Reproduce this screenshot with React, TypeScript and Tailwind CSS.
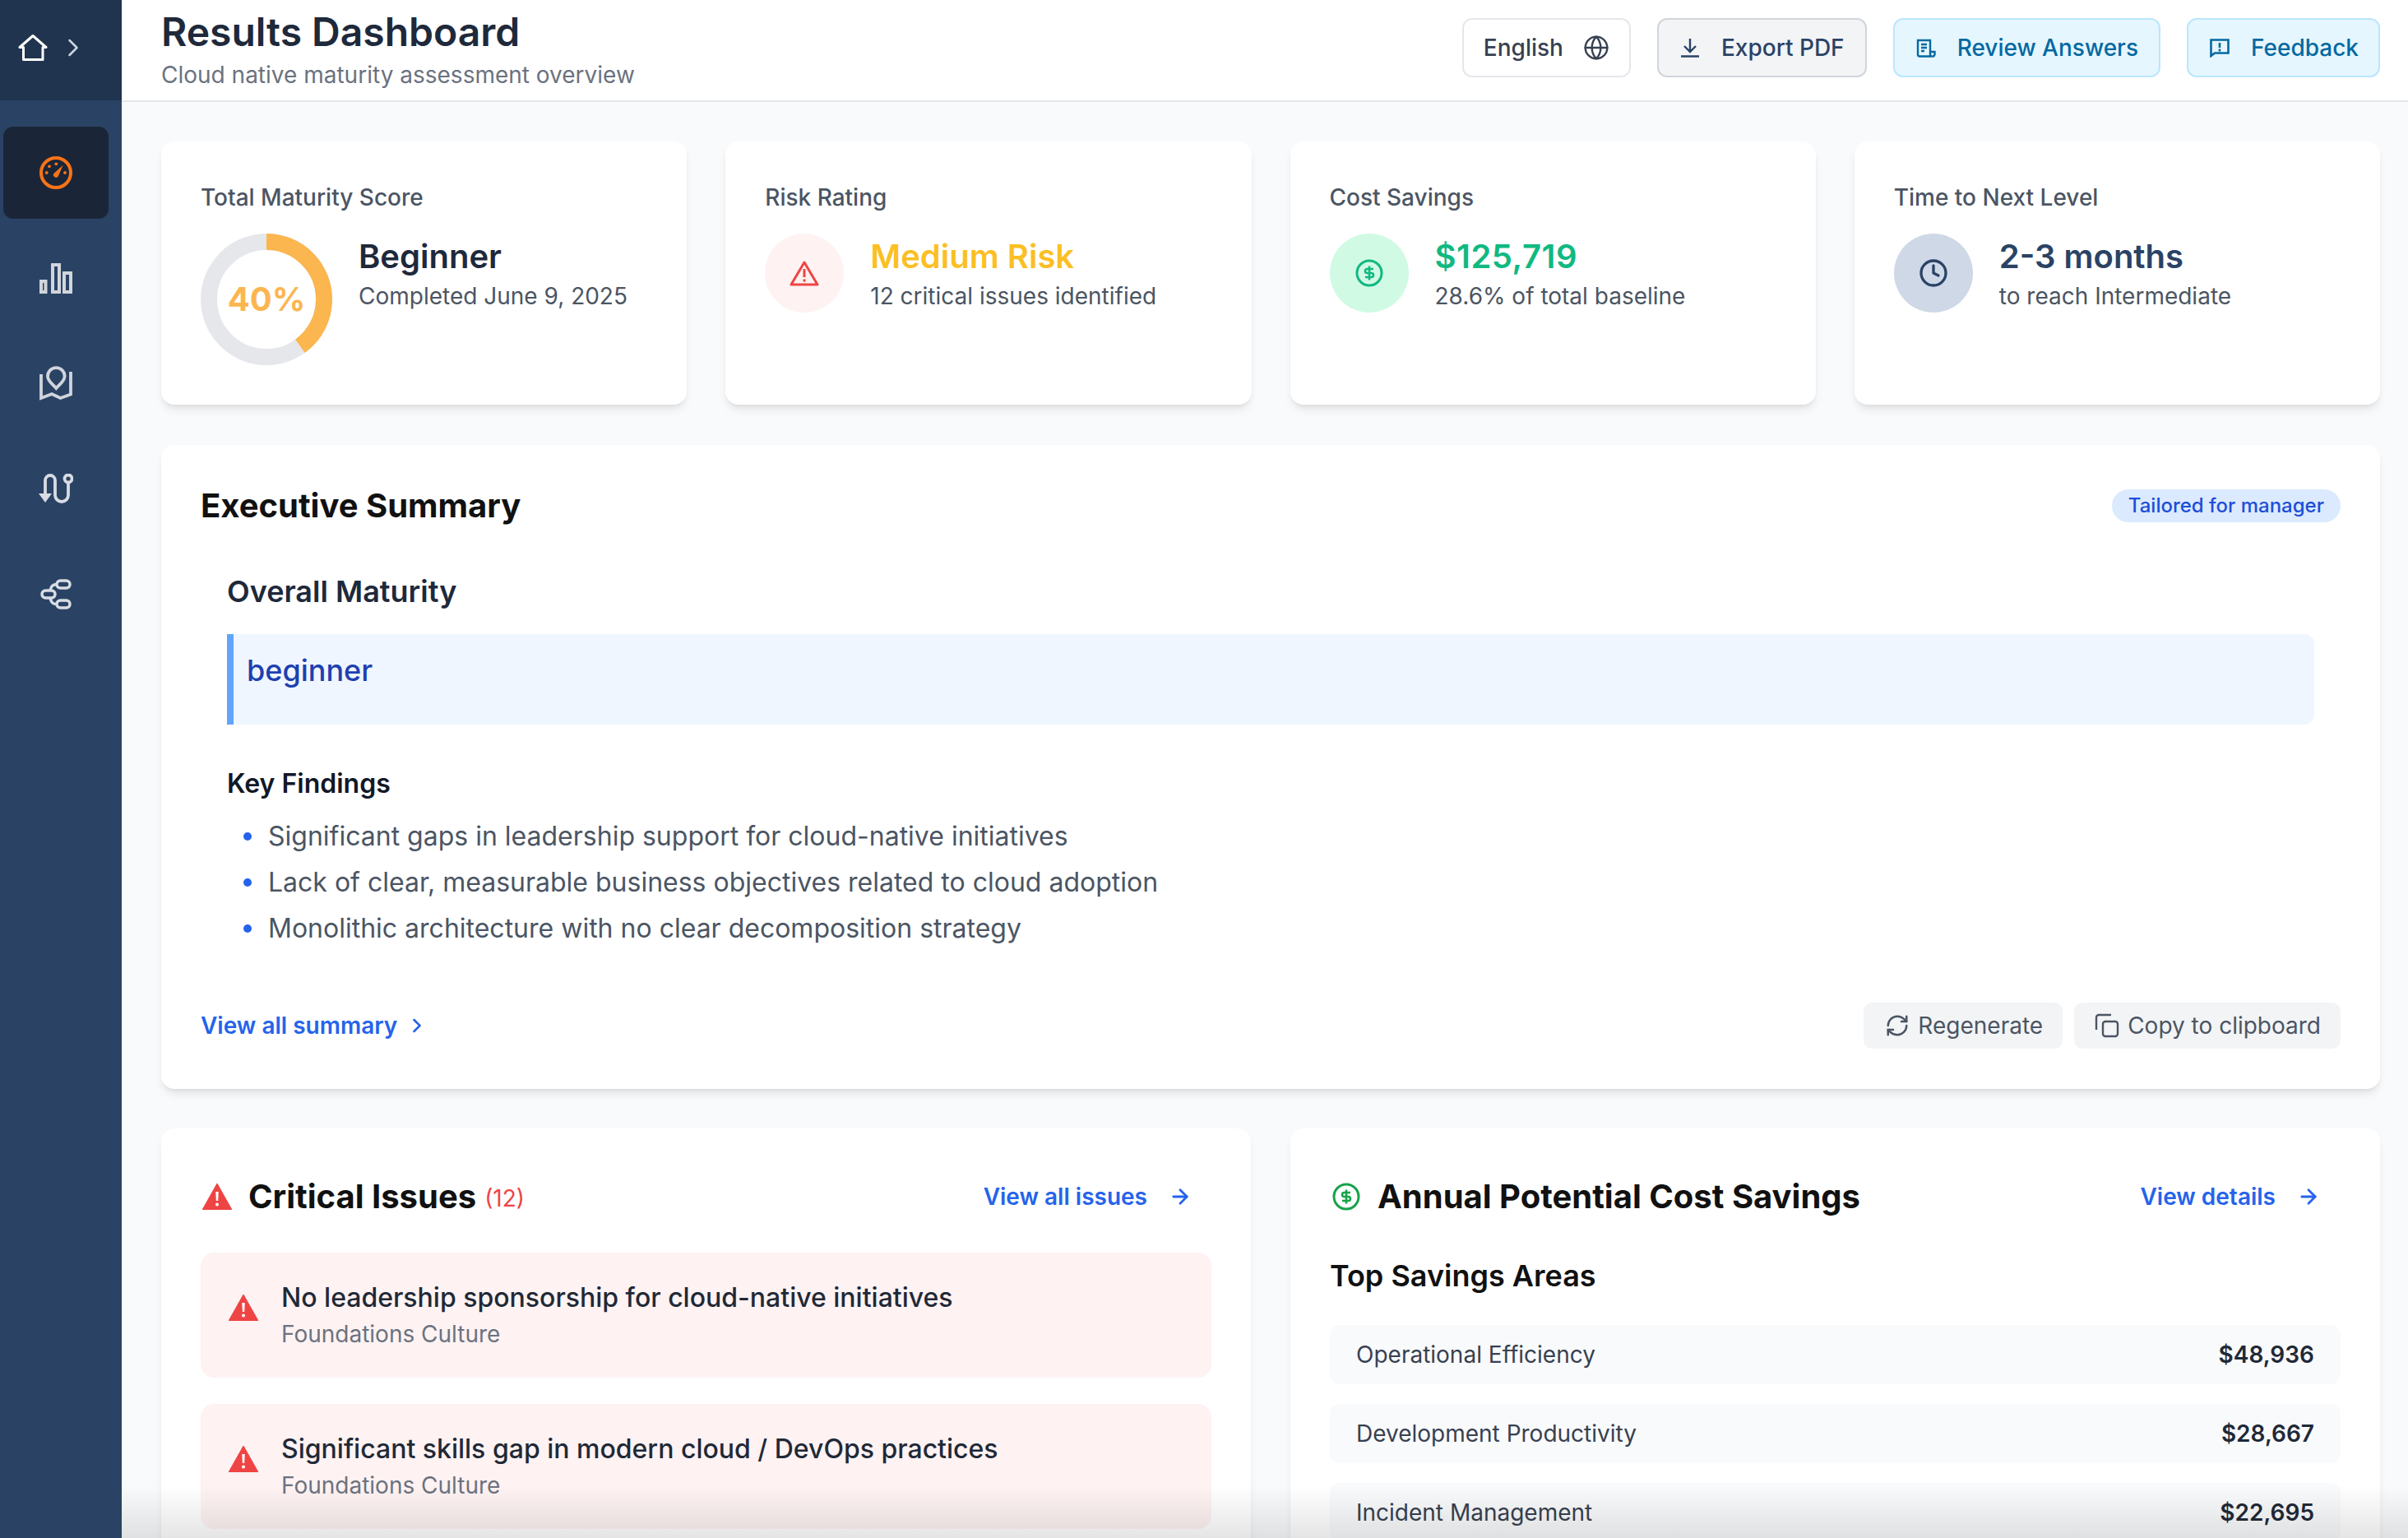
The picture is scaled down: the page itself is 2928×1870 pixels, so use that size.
import { ArrowRight, ChevronRight, Clock, Globe, RefreshCw } from "lucide-react";

function HomeIcon() {
  return (
    <svg viewBox="0 0 36 34" className="w-[36px] h-[34px]" fill="none" stroke="#fff" strokeWidth="3">
      <path d="M2 16.5 L18 2.5 L34 16.5 H30 V31.5 H6.5 V16.5 Z" strokeLinejoin="round" />
    </svg>
  );
}

function GaugeIcon() {
  return (
    <svg viewBox="0 0 40 40" className="w-[40px] h-[40px]" fill="none" stroke="#f97316" strokeWidth="4">
      <circle cx="20" cy="20" r="18" />
      <g fill="#f97316" stroke="none">
        <path d="M28.7 10.7 L23 24 A3.2 3.2 0 0 1 17.3 21 Z" />
        <circle cx="20.3" cy="9.3" r="1.9" />
        <circle cx="12" cy="12.3" r="1.9" />
        <circle cx="8.7" cy="20" r="1.9" />
        <circle cx="31" cy="20" r="1.9" />
      </g>
    </svg>
  );
}

function BarsIcon() {
  return (
    <svg viewBox="0 0 40 37" className="w-[40px] h-[37px]" fill="none" stroke="#d1d5db" strokeWidth="4">
      <rect x="2" y="22" width="5.5" height="13" />
      <rect x="16" y="2" width="8" height="33" />
      <rect x="30" y="12" width="8" height="23" />
    </svg>
  );
}

function MapIcon() {
  return (
    <svg viewBox="0 0 40 42" className="w-[40px] h-[42px]" fill="none" stroke="#d1d5db" strokeWidth="3.8">
      <path d="M20.3 27 C16 22 10 18.5 10 12.5 A10.3 10.3 0 0 1 30.6 12.5 C30.6 18.5 24.6 22 20.3 27 Z" />
      <path d="M2 10 V39 L15 34 L25.5 39 L38 34.5 V7" />
    </svg>
  );
}

function RouteIcon() {
  return (
    <svg viewBox="0 0 42 36" className="w-[42px] h-[36px]" fill="none" stroke="#d8dce3" strokeWidth="3.8">
      <circle cx="36" cy="6" r="4.5" />
      <path d="M36 11 V26 A8 8 0 0 1 20 26 V8 A6 6 0 0 0 8 8 V24" />
      <path d="M0 24 H16 L8 35 Z" fill="#d8dce3" stroke="none" />
    </svg>
  );
}

function TreeIcon() {
  return (
    <svg viewBox="0 0 38 37" className="w-[38px] h-[37px]" fill="none" stroke="#d8dce3" strokeWidth="3.5">
      <rect x="20" y="2" width="16" height="9" rx="4.5" />
      <rect x="20" y="26" width="16" height="9" rx="4.5" />
      <rect x="2" y="14" width="16" height="9" rx="4.5" />
      <path d="M20 6.5 C14 6.5 13 10 12 14 M12 23 C13 27 14 30.5 20 30.5" />
    </svg>
  );
}

function DownloadIcon() {
  return (
    <svg viewBox="0 0 24 24" className="w-[24px] h-[24px]" fill="none" stroke="currentColor" strokeWidth="2.4">
      <path d="M12 1 V17 M5 10 L12 17 L19 10 M1 22.5 H23" />
    </svg>
  );
}

function ReviewIcon() {
  return (
    <svg viewBox="0 0 24 23" className="w-[24px] h-[23px]" fill="none" stroke="currentColor" strokeWidth="2.4">
      <path d="M2 2 H17 V19 A2.5 2.5 0 0 0 19.5 21.5 H4 A2 2 0 0 1 2 19.5 Z" />
      <path d="M6 7 H13 M6 11 H13 M6 15 H10" />
      <path d="M17 16 H22.5 V19 A2.5 2.5 0 0 1 19.5 21.5" />
    </svg>
  );
}

function FeedbackIcon() {
  return (
    <svg viewBox="0 0 24 23" className="w-[24px] h-[23px]" fill="none" stroke="currentColor" strokeWidth="2.6">
      <path d="M1.5 1.5 H22.5 V17.5 H6 L1.5 21 Z" />
      <path d="M12 5 V11 M12 12.5 V15.5" />
    </svg>
  );
}

function WarnFilled({ className }: { className: string }) {
  return (
    <svg viewBox="0 0 36 32" className={className}>
      <path d="M18 0 L36 32 H0 Z" fill="#ef4444" stroke="#ef4444" strokeWidth="1" strokeLinejoin="round" />
      <path d="M16.3 10 H19.7 L19.2 21 H16.8 Z" fill="#fff" />
      <circle cx="18" cy="25.5" r="2" fill="#fff" />
    </svg>
  );
}

function WarnOutline() {
  return (
    <svg viewBox="0 0 36 32" className="w-[36px] h-[32px]" fill="none" stroke="#ef4444" strokeWidth="3">
      <path d="M18 3 L34 30 H2 Z" strokeLinejoin="round" />
      <path d="M18 11 V21 M18 23.5 V26.5" />
    </svg>
  );
}

function DollarCircle({ color, size }: { color: string; size: string }) {
  return (
    <svg viewBox="0 0 34 34" className={size} fill="none" stroke={color} strokeWidth="3">
      <circle cx="17" cy="17" r="15" />
      <path d="M22 12 H14.5 A2.5 2.5 0 0 0 14.5 17 H19.5 A2.5 2.5 0 0 1 19.5 22 H12 M17 8.5 V25.5" strokeWidth="2.6" />
    </svg>
  );
}

function CopyIcon() {
  return (
    <svg viewBox="0 0 30 30" className="w-[30px] h-[30px]" fill="none" stroke="currentColor" strokeWidth="2.4">
      <rect x="10" y="10" width="18" height="18" rx="3" />
      <path d="M2 20 V5 A3 3 0 0 1 5 2 H20" />
    </svg>
  );
}

function StatCard({ title, children }: { title: string; children: React.ReactNode }) {
  return (
    <div className="bg-white rounded-[16px] h-[320px] px-[48px] pt-[48px] shadow-[0_8px_12px_-3px_rgba(0,0,0,0.1),0_3px_6px_-3px_rgba(0,0,0,0.08)]">
      <p className="text-[28px] leading-[40px] font-medium text-[#4b5563]">{title}</p>
      <div className="flex items-start gap-[32px] mt-[24px]">{children}</div>
    </div>
  );
}

const findings = [
  "Significant gaps in leadership support for cloud-native initiatives",
  "Lack of clear, measurable business objectives related to cloud adoption",
  "Monolithic architecture with no clear decomposition strategy",
];

const savings = [
  ["Operational Efficiency", "$48,936"],
  ["Development Productivity", "$28,667"],
  ["Incident Management", "$22,695"],
];

const issues = [
  "No leadership sponsorship for cloud-native initiatives",
  "Significant skills gap in modern cloud / DevOps practices",
];

export default function App() {
  return (
    <div className="flex h-[1870px] w-full overflow-hidden font-['Inter',sans-serif] bg-[#f9fafb]">
      {/* Sidebar */}
      <aside className="w-[148px] shrink-0 bg-[#2a4365]">
        <div className="h-[122px] bg-[#21344f] flex items-center pl-[22px] pb-[6px] gap-[13px]">
          <HomeIcon />
          <ChevronRight className="w-[36px] h-[36px] text-[#cbd5e1]" strokeWidth={1.7} />
        </div>
        <nav className="pt-[32px] flex flex-col gap-[16px] pl-[4px]">
          <div className="w-[128px] h-[112px] rounded-[12px] bg-[#1a2638] flex items-center justify-center">
            <GaugeIcon />
          </div>
          <div className="w-[128px] h-[112px] flex items-center justify-center"><BarsIcon /></div>
          <div className="w-[128px] h-[112px] flex items-center justify-center"><MapIcon /></div>
          <div className="w-[128px] h-[112px] flex items-center justify-center"><RouteIcon /></div>
          <div className="w-[128px] h-[112px] flex items-center justify-center"><TreeIcon /></div>
        </nav>
      </aside>

      <div className="relative flex-1 min-w-0 flex flex-col">
        {/* Header */}
        <header className="h-[124px] shrink-0 bg-white border-b-2 border-[#e5e7eb] pl-[48px] pr-[34px] flex items-center justify-between">
          <div className="-mt-[4px]">
            <h1 className="-mt-[2px] text-[48px] leading-[64px] font-semibold text-[#1e293b]">Results Dashboard</h1>
            <p className="mt-[2px] text-[28px] leading-[36px] text-[#6b7280]">Cloud native maturity assessment overview</p>
          </div>
          <div className="-mt-[6px] flex items-center gap-[32px] text-[28px] font-medium">
            <button className="h-[72px] px-[24px] flex items-center gap-[24px] rounded-[12px] bg-white border-2 border-[#e5e7eb] text-[#374151]">
              English
              <Globe className="w-[32px] h-[32px]" strokeWidth={1.8} />
            </button>
            <button className="h-[72px] pl-[26px] pr-[25px] flex items-center gap-[26px] rounded-[12px] bg-[#f3f4f6] border-2 border-[#d1d5db] text-[#2a4365]">
              <DownloadIcon />
              Export PDF
            </button>
            <button className="h-[72px] pl-[26px] pr-[25px] flex items-center gap-[26px] rounded-[12px] bg-[#e6f6fe] border-2 border-[#bae6fd] text-[#0369a1]">
              <ReviewIcon />
              Review Answers
            </button>
            <button className="h-[72px] pl-[26px] pr-[24px] flex items-center gap-[26px] rounded-[12px] bg-[#e6f6fe] border-2 border-[#bae6fd] text-[#0369a1]">
              <FeedbackIcon />
              Feedback
            </button>
          </div>
        </header>

        {/* Content */}
        <main className="flex-1 min-h-0 overflow-hidden pl-[48px] pr-[34px] pt-[48px] flex flex-col gap-[48px]">
          <div className="grid grid-cols-4 gap-[47px] shrink-0 mb-[1px]">
            <StatCard title="Total Maturity Score">
              <div className="relative w-[160px] h-[160px] shrink-0">
                <svg viewBox="0 0 160 160" className="w-[160px] h-[160px] -rotate-90" fill="none" strokeWidth="20">
                  <circle cx="80" cy="80" r="70" stroke="#e5e7eb" />
                  <circle cx="80" cy="80" r="70" stroke="#fbb650" strokeDasharray="175.9 439.8" />
                </svg>
                <span className="absolute inset-0 flex items-center justify-center text-[40px] font-bold text-[#fbb650]">40%</span>
              </div>
              <div>
                <p className="text-[40px] leading-[56px] font-semibold text-[#1e293b]">Beginner</p>
                <p className="text-[28px] leading-[40px] text-[#4b5563]">Completed June 9, 2025</p>
              </div>
            </StatCard>
            <StatCard title="Risk Rating">
              <div className="w-[96px] h-[96px] shrink-0 rounded-full bg-[#fef2f2] flex items-center justify-center"><WarnOutline /></div>
              <div>
                <p className="text-[40px] leading-[56px] font-semibold text-[#fbbf24]">Medium Risk</p>
                <p className="text-[28px] leading-[40px] text-[#4b5563]">12 critical issues identified</p>
              </div>
            </StatCard>
            <StatCard title="Cost Savings">
              <div className="w-[96px] h-[96px] shrink-0 rounded-full bg-[#d1fae5] flex items-center justify-center">
                <DollarCircle color="#10b981" size="w-[34px] h-[34px]" />
              </div>
              <div>
                <p className="text-[40px] leading-[56px] font-semibold text-[#10b981] tracking-[0.5px]">$125,719</p>
                <p className="text-[28px] leading-[40px] text-[#4b5563]">28.6% of total baseline</p>
              </div>
            </StatCard>
            <StatCard title="Time to Next Level">
              <div className="w-[96px] h-[96px] shrink-0 rounded-full bg-[#cfd8e7] flex items-center justify-center">
                <Clock className="w-[36px] h-[36px] text-[#2a4365]" strokeWidth={2.2} />
              </div>
              <div>
                <p className="text-[40px] leading-[56px] font-semibold text-[#2a4365]">2-3 months</p>
                <p className="text-[28px] leading-[40px] text-[#4b5563]">to reach Intermediate</p>
              </div>
            </StatCard>
          </div>

          {/* Executive summary */}
          <section className="bg-white rounded-[16px] h-[783px] shrink-0 px-[48px] pt-[48px] shadow-[0_8px_12px_-3px_rgba(0,0,0,0.1),0_3px_6px_-3px_rgba(0,0,0,0.08)]">
            <div className="flex items-center justify-between h-[52px]">
              <h2 className="text-[40px] font-bold text-[#111111]">Executive Summary</h2>
              <span className="h-[40px] px-[20px] flex items-center rounded-full bg-[#dbeafe] text-[24px] font-medium text-[#1d4ed8]">Tailored for manager</span>
            </div>
            <div className="px-[32px] mt-[52px]">
              <h3 className="text-[36px] leading-[52px] font-semibold text-[#1e293b]">Overall Maturity</h3>
              <div className="mt-[26px] h-[110px] border-l-[8px] border-[#60a5fa] bg-[#eff6ff] rounded-r-[12px] pl-[16px] pt-[20px]">
                <p className="text-[36px] leading-[48px] font-medium text-[#1e40af]">beginner</p>
              </div>
              <h4 className="mt-[50px] text-[32px] leading-[44px] font-semibold text-[#111827]">Key Findings</h4>
              <ul className="mt-[20px] flex flex-col gap-[12px]">
                {findings.map((f) => (
                  <li key={f} className="flex items-center h-[44px] text-[32px] text-[#4b5563]">
                    <span className="w-[10px] h-[10px] rounded-full bg-[#2563eb] ml-[20px] mr-[20px] shrink-0" />
                    {f}
                  </li>
                ))}
              </ul>
            </div>
            <div className="flex items-center justify-between mt-[68px]">
              <a className="flex items-center gap-[10px] text-[28px] font-semibold text-[#2563eb]">
                View all summary
                <ChevronRight className="w-[28px] h-[28px]" strokeWidth={2.2} />
              </a>
              <div className="flex gap-[14px] text-[28px] text-[#4b5563]">
                <button className="h-[56px] pl-[26px] pr-[24px] flex items-center gap-[10px] rounded-[10px] bg-[#f3f4f6]">
                  <RefreshCw className="w-[30px] h-[30px]" strokeWidth={2} />
                  Regenerate
                </button>
                <button className="h-[56px] pl-[25px] pr-[24px] flex items-center gap-[10px] rounded-[10px] bg-[#f3f4f6]"><CopyIcon />Copy to clipboard</button>
              </div>
            </div>
          </section>

          {/* Bottom cards */}
          <div className="grid grid-cols-2 gap-[48px] shrink-0">
            <section className="bg-white rounded-[16px] h-[600px] px-[48px] pt-[57px] shadow-[0_8px_12px_-3px_rgba(0,0,0,0.1)]">
              <div className="flex items-center justify-between h-[52px] pr-[24px]">
                <div className="flex items-center">
                  <WarnFilled className="w-[36px] h-[32px] mr-[20px] ml-[2px]" />
                  <h2 className="text-[40px] font-bold text-[#111111]">Critical Issues</h2>
                  <span className="ml-[10px] mt-[4px] text-[28px] text-[#ef4444]">(12)</span>
                </div>
                <a className="flex items-center gap-[26px] text-[28px] font-semibold text-[#2563eb]">
                  View all issues
                  <ArrowRight className="w-[28px] h-[28px]" strokeWidth={2.4} />
                </a>
              </div>
              <div className="mt-[42px] flex flex-col gap-[32px]">
                {issues.map((t) => (
                  <div key={t} className="h-[152px] rounded-[16px] bg-[#fef2f2] flex items-center pl-[34px]">
                    <WarnFilled className="w-[36px] h-[32px] -mt-[18px] mr-[28px] shrink-0" />
                    <div>
                      <p className="text-[32px] leading-[44px] font-medium text-[#1f2937]">{t}</p>
                      <p className="text-[28px] leading-[40px] mt-[2px] text-[#6b7280]">Foundations Culture</p>
                    </div>
                  </div>
                ))}
              </div>
            </section>
            <section className="bg-white rounded-[16px] h-[600px] px-[48px] pt-[57px] shadow-[0_8px_12px_-3px_rgba(0,0,0,0.1)]">
              <div className="flex items-center justify-between h-[52px] pr-[25px]">
                <div className="flex items-center">
                  <DollarCircle color="#16a34a" size="w-[34px] h-[34px] ml-[3px] mr-[21px]" />
                  <h2 className="text-[40px] font-bold text-[#111111]">Annual Potential Cost Savings</h2>
                </div>
                <a className="flex items-center gap-[26px] text-[28px] font-semibold text-[#2563eb]">
                  View details
                  <ArrowRight className="w-[28px] h-[28px]" strokeWidth={2.4} />
                </a>
              </div>
              <h3 className="mt-[44px] text-[36px] leading-[52px] font-semibold text-[#111111]">Top Savings Areas</h3>
              <div className="mt-[34px] flex flex-col gap-[24px]">
                {savings.map(([label, amount]) => (
                  <div key={label} className="h-[72px] rounded-[12px] bg-[#f9fafb] flex items-center justify-between px-[32px] text-[28px]">
                    <span className="text-[#374151]">{label}</span>
                    <span className="font-semibold text-[#1f2937]">{amount}</span>
                  </div>
                ))}
              </div>
            </section>
          </div>
        </main>

        {/* Fade at the bottom of the scroll area */}
        <div className="absolute left-0 right-0 bottom-0 h-[64px] pointer-events-none bg-gradient-to-b from-transparent to-[rgba(0,0,0,0.1)]" />
      </div>
    </div>
  );
}
